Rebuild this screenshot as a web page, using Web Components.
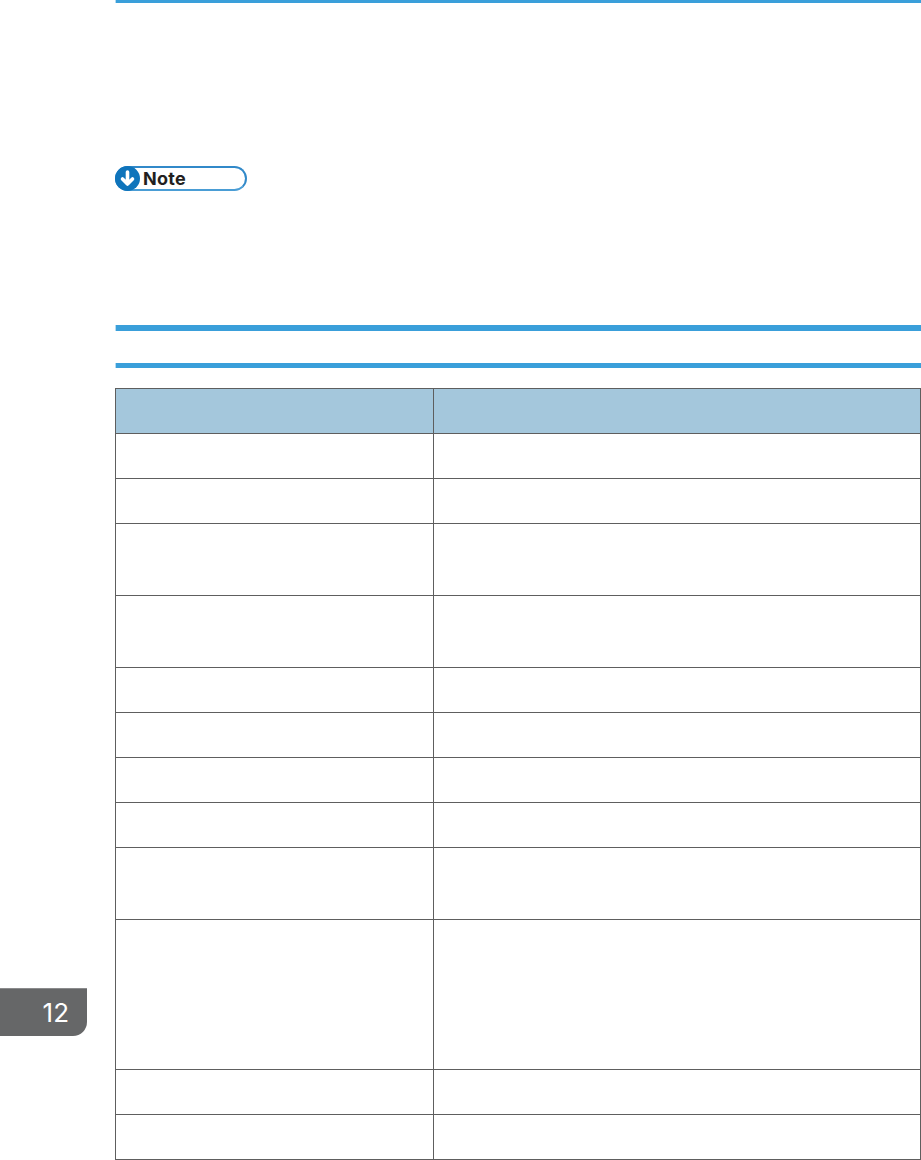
<!DOCTYPE html>
<html>
<head>
<meta charset="utf-8">
<title>Manual page</title>
<style>
  html, body { margin: 0; padding: 0; background: #fff; }
</style>
</head>
<body>
<manual-page>
  <note-badge>Note</note-badge>
  <section-rule></section-rule>
  <spec-table>
    <spec-row head></spec-row>
    <spec-row></spec-row>
    <spec-row></spec-row>
    <spec-row height="72"></spec-row>
    <spec-row height="72"></spec-row>
    <spec-row></spec-row>
    <spec-row></spec-row>
    <spec-row></spec-row>
    <spec-row></spec-row>
    <spec-row height="72"></spec-row>
    <spec-row height="150"></spec-row>
    <spec-row></spec-row>
    <spec-row></spec-row>
  </spec-table>
</manual-page>
<chapter-tab>12</chapter-tab>

<script>
class ManualPage extends HTMLElement {
  constructor() {
    super();
    this.attachShadow({ mode: 'open' });
  }
  connectedCallback() {
    this.shadowRoot.innerHTML = `
      <style>
        :host { display: block; width: 921px; height: 1160px; box-sizing: border-box; padding-left: 115px; overflow: hidden; }
        #top-bar { height: 3px; background: #3a9fda; border-left: 1px solid #b5dcf2; }
        #content { display: flex; flex-direction: column; padding-top: 163px; }
      </style>
      <div id="top-bar"></div>
      <div id="content"><slot></slot></div>
    `;
  }
}
customElements.define('manual-page', ManualPage);

class NoteBadge extends HTMLElement {
  constructor() {
    super();
    this.attachShadow({ mode: 'open' });
  }
  connectedCallback() {
    this.shadowRoot.innerHTML = `
      <style>
        :host { display: block; width: 132px; height: 25px; margin-bottom: 134px; }
        #pill { box-sizing: border-box; height: 100%; display: flex; align-items: center; gap: 3px; border: 2px solid #3189c9; border-bottom-color: #4a9dd5; border-radius: 13px; }
        svg { display: block; flex-shrink: 0; margin: -2px 0 -2px -2px; }
        #label { color: #231f20; font-family: Inter, "Liberation Sans", sans-serif; font-size: 18px; font-weight: 700; line-height: 20px; letter-spacing: 0.3px; }
      </style>
      <div id="pill">
        <svg width="25" height="25" viewBox="0 0 25 25">
          <circle cx="12.5" cy="12.5" r="12.5" fill="#0f74bb"/>
          <path d="M12.5 6v12M7.5 13l5 5 5-5" fill="none" stroke="#fff" stroke-width="3.6" stroke-linecap="round" stroke-linejoin="round"/>
        </svg>
        <span id="label"><slot></slot></span>
      </div>
    `;
  }
}
customElements.define('note-badge', NoteBadge);

class SectionRule extends HTMLElement {
  constructor() {
    super();
    this.attachShadow({ mode: 'open' });
  }
  connectedCallback() {
    this.shadowRoot.innerHTML = `
      <style>
        :host { display: block; margin-bottom: 20px; }
        .bar { background: #3a9fda; border-left: 1px solid #b5dcf2; }
        #upper { height: 6px; }
        #lower { height: 5px; }
        #heading { height: 32px; }
      </style>
      <div class="bar" id="upper"></div>
      <div id="heading"><slot></slot></div>
      <div class="bar" id="lower"></div>
    `;
  }
}
customElements.define('section-rule', SectionRule);

class SpecTable extends HTMLElement {
  constructor() {
    super();
    this.attachShadow({ mode: 'open' });
  }
  connectedCallback() {
    this.shadowRoot.innerHTML = `
      <style>
        :host { display: block; box-sizing: border-box; border-top: 1px solid #5e5e5e; border-left: 1px solid #5e5e5e; border-right: 1px solid #5e5e5e; }
      </style>
      <slot></slot>
    `;
  }
}
customElements.define('spec-table', SpecTable);

class SpecRow extends HTMLElement {
  constructor() {
    super();
    this.attachShadow({ mode: 'open' });
  }
  connectedCallback() {
    const height = Number(this.getAttribute('height') || 45);
    this.shadowRoot.innerHTML = `
      <style>
        :host { display: grid; grid-template-columns: 318px 1fr; box-sizing: border-box; height: ${height}px; border-bottom: 1px solid #5e5e5e; }
        :host([head]) { background: #a4c7dc; }
        .cell { min-width: 0; }
        #first { border-right: 1px solid #5e5e5e; }
      </style>
      <div class="cell" id="first"><slot name="term"></slot></div>
      <div class="cell"><slot></slot></div>
    `;
  }
}
customElements.define('spec-row', SpecRow);

class ChapterTab extends HTMLElement {
  constructor() {
    super();
    this.attachShadow({ mode: 'open' });
  }
  connectedCallback() {
    this.shadowRoot.innerHTML = `
      <style>
        :host { position: absolute; left: 0; top: 988px; width: 87px; height: 48px; box-sizing: border-box; display: flex; align-items: center; justify-content: flex-end; padding-right: 18px; background: #666768; border-top: 1px solid #8a8b8c; border-bottom-right-radius: 14px; color: #fff; font-family: Inter, "Liberation Sans", sans-serif; font-size: 26px; font-weight: 400; }
      </style>
      <slot></slot>
    `;
  }
}
customElements.define('chapter-tab', ChapterTab);
</script>
</body>
</html>
